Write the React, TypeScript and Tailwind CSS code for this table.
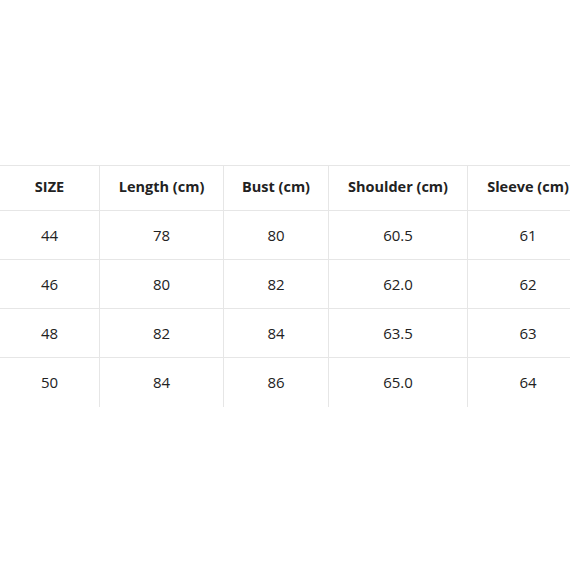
import React from "react";

const headers = ["SIZE", "Length (cm)", "Bust (cm)", "Shoulder (cm)", "Sleeve (cm)"];
const rows = [
  ["44", "78", "80", "60.5", "61"],
  ["46", "80", "82", "62.0", "62"],
  ["48", "82", "84", "63.5", "63"],
  ["50", "84", "86", "65.0", "64"],
];
const widths = ["w-[100px]", "w-[124px]", "w-[105px]", "w-[139px]", "w-[120px]"];

export default function App() {
  return (
    <div
      className="w-[570px] h-[570px] overflow-hidden bg-white text-[#222]"
      style={{ fontFamily: '"Open Sans", "Noto Sans", sans-serif' }}
    >
      <div className="pt-[165px]">
        <div className="w-[588px] border-t border-[#e6e6e6]">
          <div className="flex h-[45px] border-b border-[#e6e6e6]">
            {headers.map((h, i) => (
              <div
                key={h}
                className={`${widths[i]} shrink-0 flex items-center justify-center pb-[3px] font-bold text-[14.5px] ${i < 4 ? "border-r border-[#e6e6e6]" : ""}`}
              >
                {h}
              </div>
            ))}
          </div>
          {rows.map((r, ri) => (
            <div
              key={ri}
              className={`flex h-[49px] ${ri < rows.length - 1 ? "border-b border-[#e6e6e6]" : ""}`}
            >
              {r.map((c, i) => (
                <div
                  key={i}
                  className={`${widths[i]} shrink-0 flex items-center justify-center text-[15px] ${i < 4 ? "border-r border-[#e6e6e6]" : ""}`}
                >
                  {c}
                </div>
              ))}
            </div>
          ))}
        </div>
      </div>
    </div>
  );
}
